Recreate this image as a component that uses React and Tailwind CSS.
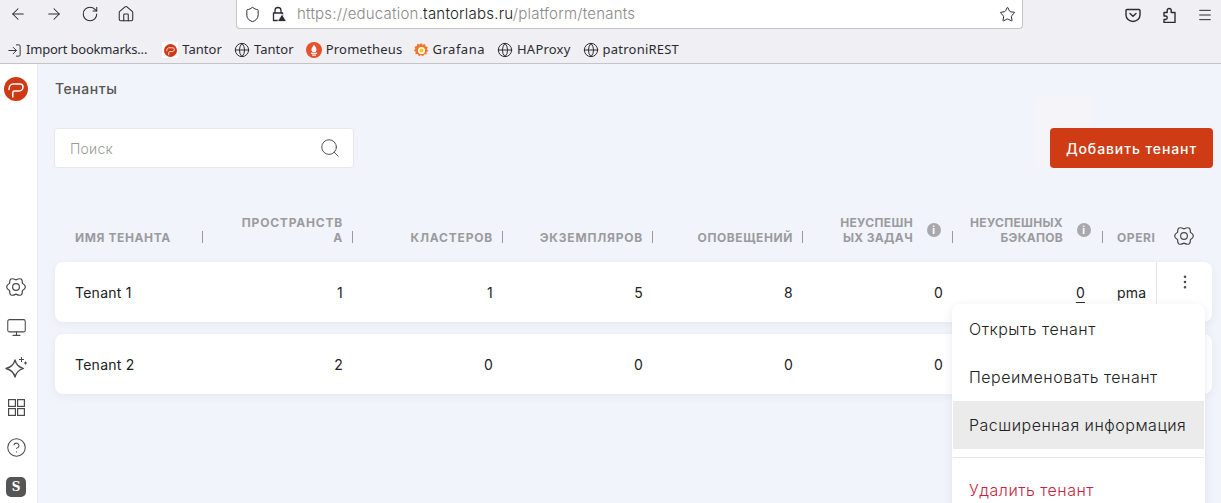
import { ArrowLeft, ArrowRight, RotateCw, House, Shield, Star, Menu, Globe, LogIn, Monitor, CircleHelp, Search, EllipsisVertical } from 'lucide-react';

const TantorLogo = ({ size = 24 }) => (
  <svg width={size} height={size} viewBox="0 0 24 24" className="shrink-0">
    <circle cx="12" cy="12" r="12" fill="#cf3a14" />
    <path d="M5 12.500c0-3.500 2-5.500 4-5.500h7c2 0 3 1 3 3s-1.500 4-4 4h-5c-.8 0-1.200 1-1.200 2v4" fill="none" stroke="#fff" strokeWidth="1.500" strokeLinecap="round" />
  </svg>
);

const PrometheusIcon = () => (
  <svg width="16" height="16" viewBox="0 0 16 16">
    <circle cx="8" cy="8" r="8" fill="#e6522c" />
    <path d="M8 2.500c.5 2 2.500 2.500 2.500 5 0 1-.5 2-1 2.500h-3c-.5-.5-1-1.500-1-2.500 0-2 1.500-2.500 2.500-5z" fill="#fff" />
    <rect x="5" y="10.700" width="6" height="1.200" fill="#fff" />
    <rect x="6" y="12.500" width="4" height="1.200" fill="#fff" />
  </svg>
);

const GrafanaIcon = () => (
  <svg width="16" height="16" viewBox="0 0 16 16">
    <path d="M8 1l1.500 1.800L12 2l.5 2.300 2.300.7-1 2.200 1.700 1.600-2 1.200.2 2.400-2.400-.1L10 14.500 8 13l-2.200 1.300-1-2.200-2.400.1.300-2.400L.7 8.600l1.600-1.700-.8-2.200 2.300-.7.600-2.300 2.300.8z" fill="#f2762e" />
    <circle cx="8.500" cy="8.500" r="3.500" fill="#fff" />
    <circle cx="8.500" cy="8.500" r="2" fill="#fbca0a" />
  </svg>
);

// rounded six lobe gear, same one in the sidebar and the table header
const Gear = ({ size = 22 }) => (
  <svg width={size} height={size} viewBox="0 0 24 24" fill="none" stroke="#4a4a4a" strokeWidth="1.300" strokeLinejoin="round">
    <path d="M18.900 8Q25.500 12 18.900 16Q19.500 23.500 12 19.800Q4.500 23.500 5.100 16Q-1.500 12 5.100 8Q4.500 .5 12 4.200Q19.500 .5 18.900 8z" />
    <circle cx="12" cy="12" r="3.700" />
  </svg>
);

const Bookmark = ({ icon, label, track = 'tracking-[0.22px]' }) => (
  <div className="flex items-center gap-[4px]">
    {icon}
    <span className={track}>{label}</span>
  </div>
);

const globe = <Globe size={16} strokeWidth={1.500} className="text-[#2b2b33]" />;

function BrowserChrome() {
  return (
    <div className="h-[64px] bg-[#f0f0f4] border-b border-[#c4c4c8] text-[#2b2b33] font-['Noto_Sans',sans-serif]">
      <div className="h-[29px] flex items-center">
        <div className="w-[236px] flex items-center pl-[9px] gap-[18px] -mt-[1px]">
          <ArrowLeft size={18} strokeWidth={1.400} />
          <ArrowRight size={18} strokeWidth={1.400} />
          <RotateCw size={18} strokeWidth={1.400} />
          <House size={18} strokeWidth={1.400} />
        </div>
        <div className="w-[787px] h-[29px] bg-white border-x border-b border-[#c4c4c8] rounded-b-[4px] flex items-center pl-[7px] pr-[6px]">
          <Shield size={17} strokeWidth={1.400} />
          <div className="ml-[10px] mr-[9px] w-[16px] h-[16px]">
            <svg width="16" height="16" viewBox="0 0 16 16" fill="none">
              <path d="M4 7V4.500a3 3 0 0 1 6 0V7M2.500 7h9v7.500h-9z" stroke="#2b2b33" strokeWidth="1.300" />
              <path d="M11 8l4.500 7.500h-9z" fill="#2b2b33" stroke="#fff" strokeWidth=".8" />
            </svg>
          </div>
          <span className="ml-[1px] text-[15px] font-['Inter',sans-serif] font-light text-[#8a8a8a] tracking-[0.22px] whitespace-nowrap">
            https://education.<span className="text-[#222]">tantorlabs.ru</span>/platform/tenants
          </span>
          <Star size={17} strokeWidth={1.400} className="ml-auto" />
        </div>
        <div className="flex-1 flex items-center justify-end gap-[20px] pr-[8px]">
          <svg width="16" height="16" viewBox="0 0 16 16" fill="none" stroke="#2b2b33" strokeWidth="1.400">
            <path d="M2 2.500h12c.5 0 1 .4 1 1V8a7 6.500 0 0 1-14 0V3.500c0-.6.500-1 1-1z" />
            <path d="M5 6.500l3 2.800 3-2.800" strokeLinecap="round" />
          </svg>
          <svg width="16" height="16" viewBox="0 0 16 16" fill="none" stroke="#2b2b33" strokeWidth="1.400" strokeLinejoin="round">
            <path d="M3 5.500h3.200V3.500a2 2 0 1 1 4 0v2H14v10H3v-3h1.500a1.700 1.700 0 0 0 0-3.500H3z" />
          </svg>
          <Menu size={16} strokeWidth={1.500} />
        </div>
      </div>
      <div className="h-[34px] flex items-center pl-[7px] pt-[8px] gap-[12px] text-[13px] whitespace-nowrap">
        <div className="mr-[3px]">
          <Bookmark icon={<LogIn size={15} strokeWidth={1.500} />} label="Import bookmarks..." track="tracking-[-0.2px]" />
        </div>
        <Bookmark icon={<span className="w-[16px] h-[16px] bg-white flex items-center justify-center"><TantorLogo size={13} /></span>} label="Tantor" track="tracking-[0.05px]" />
        <Bookmark icon={globe} label="Tantor" track="tracking-[0.05px]" />
        <Bookmark icon={<PrometheusIcon />} label="Prometheus" />
        <div className="-ml-[2px]">
          <Bookmark icon={<GrafanaIcon />} label="Grafana" track="tracking-[0.5px]" />
        </div>
        <Bookmark icon={globe} label="HAProxy" />
        <Bookmark icon={globe} label="patroniREST" />
      </div>
    </div>
  );
}

const SideSlot = ({ children }) => <div className="h-[40px] shrink-0 flex items-center justify-center">{children}</div>;

function Sidebar() {
  return (
    <div className="w-[38px] shrink-0 bg-white border-r border-[#e8ebf3] flex flex-col items-center pr-[5px] pt-[13px]">
      <TantorLogo />
      <div className="mt-[166px] shrink-0 flex flex-col items-center text-[#4a4a4a]">
        <SideSlot><Gear /></SideSlot>
        <SideSlot><Monitor size={21} strokeWidth={1.200} /></SideSlot>
        <SideSlot>
          <svg width="23" height="22" viewBox="0 0 23 22" fill="none" stroke="#4a4a4a" strokeWidth="1.300" strokeLinejoin="round">
            <path d="M10 4Q11.500 10.500 18.500 12.500Q11.500 14.500 10 21Q8.500 14.500 1 12.500Q8.500 10.500 10 4z" />
            <path d="M16.500 1v5M14 3.500h5M20.500 5.500v3M19 7h3" strokeWidth="1" />
          </svg>
        </SideSlot>
        <SideSlot>
          <svg width="17" height="17" viewBox="0 0 17 17" fill="none" stroke="#4a4a4a" strokeWidth="1.200">
            <rect x=".6" y=".6" width="6.800" height="6.800" />
            <rect x="9.600" y=".6" width="6.800" height="6.800" />
            <rect x=".6" y="9.600" width="6.800" height="6.800" />
            <rect x="9.600" y="9.600" width="6.800" height="6.800" />
          </svg>
        </SideSlot>
        <SideSlot><CircleHelp size={21} strokeWidth={1.200} /></SideSlot>
        <SideSlot>
          <div className="w-[20px] h-[20px] rounded-[5px] bg-[#555] text-white text-[12px] font-bold flex items-center justify-center font-['DejaVu_Serif',serif]">S</div>
        </SideSlot>
      </div>
    </div>
  );
}

const InfoDot = () => (
  <span className="w-[14px] h-[14px] rounded-full bg-[#a9a9ad] text-white text-[10px] font-bold leading-none flex items-center justify-center shrink-0">i</span>
);

const Sep = () => <span className="mb-[2px] w-px h-[12px] bg-[#9a9a9a] shrink-0" />;

const HeadCell = ({ lines, info, track = 'tracking-[0.8px]' }) => (
  <div className="w-[150px] shrink-0 flex items-end justify-end pr-[2px]">
    <div className={`text-right leading-[15px] ${track}`}>
      {lines.map(l => <div key={l}>{l}</div>)}
    </div>
    {info
      ? <div className="self-center w-[39px] flex justify-end pr-[11px]"><InfoDot /></div>
      : <span className="w-[9px]" />}
    <Sep />
  </div>
);

const Row = ({ name, values, link, tail }) => (
  <div className="h-[60px] w-[1157px] bg-white rounded-[8px] shadow-[0_2px_6px_rgba(210,215,230,0.35)] flex items-center text-[14px] text-[#222] tracking-[0.25px] overflow-hidden">
    <div className="w-[150px] shrink-0 pl-[20px]">{name}</div>
    {values.map((v, i) => (
      <div key={i} className="w-[150px] shrink-0 text-right pr-[12px]">{v}</div>
    ))}
    <div className="w-[150px] shrink-0 text-right pr-[20px]">{link && <span className="underline underline-offset-4">{link}</span>}</div>
    <div className="w-[51px] shrink-0 pl-[12px]">{tail}</div>
    <div className="flex-1 h-full border-l border-[#e4e4ee] flex justify-center pt-[11px]">
      <EllipsisVertical size={18} strokeWidth={1.500} className="text-[#444]" />
    </div>
  </div>
);

const MenuItem = ({ label, active, danger }) => (
  <div className={`h-[48px] flex items-center pl-[16px] mx-px ${active ? 'bg-[#ebebeb]' : ''} ${danger ? 'text-[#c8243f]' : 'text-[#222]'}`}>{label}</div>
);

export default function App() {
  return (
    <div className="w-[1221px] h-[503px] overflow-hidden relative font-['Inter',sans-serif] bg-[#f1f4fa]">
      <BrowserChrome />
      <div className="flex h-[439px]">
        <Sidebar />
        <div className="flex-1 pl-[17px] pr-[8px] relative">
          <h1 className="mt-[16px] h-[18px] text-[14px] leading-[18px] font-medium text-[#555] tracking-[0.55px]">Тенанты</h1>

          <div className="mt-[30px] flex justify-between relative">
            <div className="-ml-px w-[300px] h-[40px] bg-white border border-[#e6e8f0] rounded-[4px] flex items-center pl-[15px] pr-[12px]">
              <span className="text-[14px] text-[#9a9a9a] font-light tracking-[0.2px]">Поиск</span>
              <Search size={22} strokeWidth={1} className="ml-auto text-[#444]" />
            </div>
            <div className="absolute left-[980px] -top-[31px] w-[57px] h-[71px] bg-[#f5f4f8]" />
            <button className="relative w-[163px] h-[40px] bg-[#cf3b14] rounded-[4px] text-white text-[14px] font-medium tracking-[0.9px]">Добавить тенант</button>
          </div>

          <div className="mt-[43px] h-[34px] w-[1157px] flex items-end text-[12px] font-bold text-[#9b9b9f] tracking-[0.6px]">
            <div className="w-[150px] shrink-0 flex items-end justify-between pl-[20px] pr-[2px] leading-[15px]">
              <span>ИМЯ ТЕНАНТА</span><Sep />
            </div>
            <HeadCell lines={['ПРОСТРАНСТВ', 'А']} />
            <HeadCell lines={['КЛАСТЕРОВ']} />
            <HeadCell lines={['ЭКЗЕМПЛЯРОВ']} />
            <HeadCell lines={['ОПОВЕЩЕНИЙ']} track="tracking-[0.6px]" />
            <HeadCell lines={['НЕУСПЕШН', 'ЫХ ЗАДАЧ']} track="tracking-[0.35px]" info />
            <HeadCell lines={['НЕУСПЕШНЫХ', 'БЭКАПОВ']} track="tracking-[0.3px]" info />
            <div className="w-[51px] shrink-0 pl-[12px] leading-[15px]">OPERI</div>
            <div className="flex-1 flex justify-center relative top-[2px]">
              <Gear />
            </div>
          </div>

          <div className="mt-[17px] flex flex-col gap-[12px]">
            <Row name="Tenant 1" values={[1, 1, 5, 8, 0]} link="0" tail="pma" />
            <Row name="Tenant 2" values={[2, 0, 0, 0, 0]} />
          </div>

          {/* row menu */}
          <div className="absolute left-[914px] top-[240px] w-[253px] h-[220px] bg-white rounded-[8px] shadow-[0_2px_10px_rgba(190,195,215,0.35)] pt-[1px] text-[16px] tracking-[0.5px] font-light">
            <MenuItem label="Открыть тенант" />
            <MenuItem label="Переименовать тенант" />
            <MenuItem label="Расширенная информация" active />
            <div className="h-px bg-[#e8e8e8] mx-px mt-[8px]" />
            <div className="mt-[8px]"><MenuItem label="Удалить тенант" danger /></div>
          </div>
        </div>
      </div>
    </div>
  );
}
